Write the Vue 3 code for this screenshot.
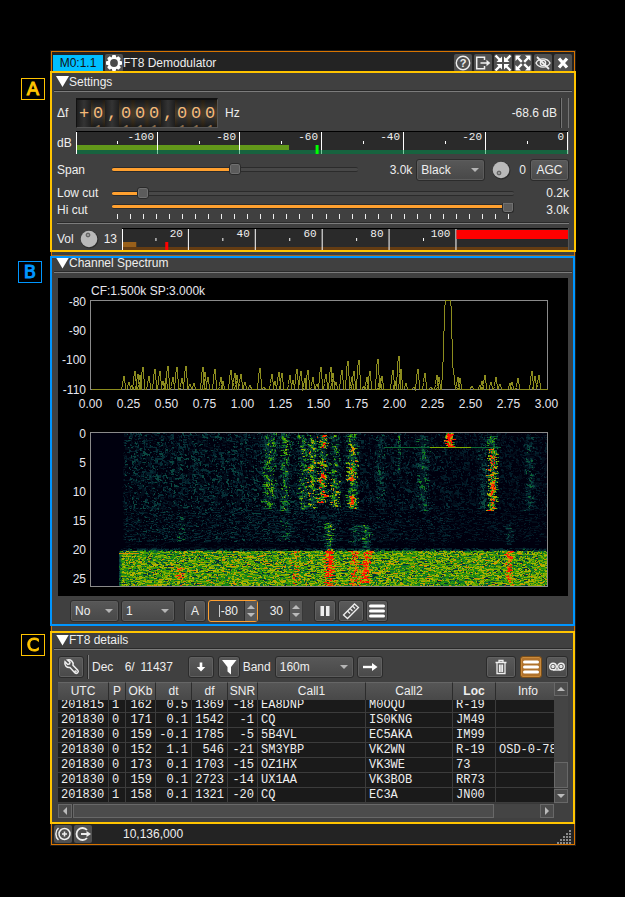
<script setup>
import { ref, onMounted } from 'vue'

const span = ref(50)
const lowCut = ref(6.5)
const hiCut = ref(100)

const dial = '+0,000,000'.split('')

const levelMajors = [-100, -80, -60, -40, -20, 0].map((v) => ({ label: v, at: ((v + 120) / 120) * 100 }))
const levelMinors = [-110, -90, -70, -50, -30, -10].map((v) => ((v + 120) / 120) * 100)
const volMajors = [20, 40, 60, 80, 100].map((v) => ({ label: v, at: v * 0.75 }))
const volMinors = [10, 30, 50, 70, 90].map((v) => v * 0.75)
const cutTicks = Array.from({ length: 31 }, (_, i) => i)

const dbLabels = [-80, -90, -100, -110].map((v, i) => ({ v, y: [27, 56, 85, 115][i] }))
const freqLabels = Array.from({ length: 13 }, (_, i) => ({ v: (i * 0.25).toFixed(2), x: 32.5 + i * 38 }))
const timeLabels = [0, 5, 10, 15, 20, 25].map((v, i) => ({ v, y: 160 + i * 29 }))

/* Trace: noise peaks as [x, y] above the floor of the plot */
const peaks = [
  [66, 98], [71, 104], [74, 107], [77, 93], [80, 96], [82, 97], [85, 89], [91, 98], [97, 91], [102, 93], [105, 103], [108, 100],
  [110, 88], [115, 99], [119, 89], [124, 100], [128, 88], [132, 106], [136, 105], [145, 89], [147, 94], [150, 99], [157, 91], [163, 99],
  [165, 103], [173, 92], [177, 95], [179, 97], [183, 96], [187, 104], [192, 107], [202, 90], [206, 109], [214, 96], [217, 103], [221, 94],
  [224, 95], [232, 97], [235, 102], [239, 91], [243, 93], [247, 100], [250, 92], [255, 99], [259, 106], [263, 89], [268, 96], [273, 89],
  [275, 95], [278, 104], [284, 92], [290, 83], [294, 99], [296, 93], [301, 82], [306, 108], [309, 99], [312, 93], [320, 81], [322, 100],
  [324, 98], [335, 92], [337, 103], [341, 78], [343, 91], [348, 105], [356, 109], [360, 91], [367, 95], [373, 109], [379, 97], [381, 99]
]
const peaksAfter = [
  [400, 99], [402, 100], [414, 108], [422, 107], [424, 103], [427, 97], [433, 104], [438, 99], [442, 106], [452, 105], [454, 104],
  [460, 100], [474, 93], [477, 98], [481, 97]
]
const spike = (list) => list.map(([x, y]) => `L${x - 3} 111L${x - 2} ${Math.min(110, y + 9)}L${x - 1} ${y}L${x} ${y}L${x + 1} 111`).join('')
const trace = `M33 111${spike(peaks)}L383 111L385 75L386 32L387 22L392 22L393 33L394 87L395 92L397 111${spike(peaksAfter)}L489 111`

/* Waterfall: deterministic noise, bucketed into one path per colour */
let seed = 7331
function rnd() {
  seed = (seed + 0x6d2b79f5) | 0
  let t = Math.imul(seed ^ (seed >>> 15), 1 | seed)
  t = (t + Math.imul(t ^ (t >>> 7), 61 | t)) ^ t
  return ((t ^ (t >>> 14)) >>> 0) / 4294967296
}
const palette = [
  '#00000e', '#020d1a', '#031c28', '#062e36', '#0a4640', '#0c6634', '#158218', '#3f9a06', '#7dab00', '#b3b200', '#d98b00', '#ee4a06', '#ff1000'
]
/* [centre x, top, bottom, half width, strength] */
const streaks = [
  [178, 0, 76, 6, 4], [194, 0, 78, 4, 3.8], [212, 2, 77, 4, 3.9], [221, 2, 76, 4, 5.4], [231, 2, 16, 4, 9], [231, 16, 28, 4, 4],
  [231, 28, 70, 4, 8.6], [243, 2, 46, 4, 3.4], [243, 46, 74, 4, 6.4], [261, 1, 28, 5, 6], [261, 28, 48, 5, 8.6], [261, 48, 62, 5, 4.6],
  [261, 62, 76, 5, 8.6], [289, 2, 70, 4, 1.8], [308, 0, 40, 1, 3.6], [332, 3, 78, 5, 3], [358, 0, 15, 4, 18], [392, 4, 76, 4, 2.2],
  [401, 3, 16, 4, 5.4], [401, 16, 78, 4, 10.5], [438, 4, 78, 4, 2.5], [90, 84, 108, 3, 2], [194, 88, 108, 4, 2.6],
  [238, 90, 115, 4, 5.4], [238, 115, 154, 4, 7], [264, 92, 113, 5, 2.6], [264, 118, 154, 5, 2.6], [275, 92, 115, 4, 5],
  [275, 116, 150, 4, 6], [418, 92, 112, 4, 2.6], [418, 118, 154, 3, 3.8], [204, 118, 154, 3, 2.4], [88, 134, 154, 4, 2.2]
]
function buildWaterfall() {
  const W = 456
  const H = 153
  const paths = palette.map(() => '')
  const above = new Array(W + 1).fill(0)
  for (let y = 0; y < H; y++) {
    const wobble = streaks.map(() => (rnd() - 0.5) * 5)
    let prev = rnd()
    let runStart = 0
    let runLevel = -1
    for (let x = 0; x <= W; x++) {
      let level = -2
      if (x < W) {
        const fresh = rnd()
        let n = rnd() < 0.4 ? prev : fresh
        if (y < 76 && rnd() < 0.25) n = above[x]
        prev = n
        above[x] = n
        let v = 0
        const left = y >= 116 ? 28 : 31
        if (x >= left) {
          const edge = Math.min(1, (x - left + 1) / 4)
          if (y >= 118) v = (5 + n * 5 + (n > 0.96 ? 1 : 0)) * (0.4 + 0.6 * edge) - (n < 0.08 ? 1.5 : 0)
          else if (y >= 115) v = n * (2 + (y - 114) * 1.6) * edge
          else {
            const fade = x < 250 ? 1 : x < 360 ? 0.78 : 0.62
            const zone = y > 108 ? 0.35 : y > 76 ? 0.9 : 1
            v = n * n * 4.7 * fade * zone * edge
          }
          for (let s = 0; s < streaks.length; s++) {
            const k = streaks[s]
            if (y < k[1] || y >= k[2]) continue
            const d = Math.abs(x - k[0] - (k[3] > 1 ? wobble[s] : 0))
            if (d <= k[3]) v += k[4] * (1 - (d / (k[3] + 1)) * 0.6) * (0.4 + n * 0.85)
          }
          if (y === 14 && x > 292 && x < 410) v = x > 338 && x < 380 ? 8 : 5
          if (y === 120 && x < 48) v = 10
        }
        level = Math.max(0, Math.min(palette.length - 1, Math.floor(v)))
      }
      if (level !== runLevel) {
        if (runLevel > 0) paths[runLevel] += `M${runStart} ${y}h${x - runStart}v1h-${x - runStart}z`
        runStart = x
        runLevel = level
      }
    }
  }
  return paths.map((d, i) => ({ d, fill: palette[i] })).filter((p) => p.d)
}
const waterfall = buildWaterfall()

const columns = ['UTC', 'P', 'OKb', 'dt', 'df', 'SNR', 'Call1', 'Call2', 'Loc', 'Info']
const rows = [
  ['201815', '1', '162', '0.5', '1369', '-18', 'EA8DNP', 'M0OQU', 'R-19', ''],
  ['201830', '0', '171', '0.1', '1542', '-1', 'CQ', 'IS0KNG', 'JM49', ''],
  ['201830', '0', '159', '-0.1', '1785', '-5', '5B4VL', 'EC5AKA', 'IM99', ''],
  ['201830', '0', '152', '1.1', '546', '-21', 'SM3YBP', 'VK2WN', 'R-19', 'OSD-0-78'],
  ['201830', '0', '173', '0.1', '1703', '-15', 'OZ1HX', 'VK3WE', '73', ''],
  ['201830', '0', '159', '0.1', '2723', '-14', 'UX1AA', 'VK3BOB', 'RR73', ''],
  ['201830', '1', '158', '0.1', '1321', '-20', 'CQ', 'EC3A', 'JN00', '']
]
const messages = ref(null)
onMounted(() => {
  messages.value.scrollTop = messages.value.scrollHeight
})
</script>

<template>
  <main class="page">
    <div class="window">
      <header class="titlebar">
        <span class="channel">M0:1.1</span>
        <button class="tool gear" aria-label="Channel settings">
          <svg viewBox="0 0 18 18">
            <g fill="#fff">
              <rect v-for="a in 4" :key="a" x="7" y="1" width="4" height="16" rx="1" :transform="`rotate(${a * 45} 9 9)`" />
              <circle cx="9" cy="9" r="6.3" />
            </g>
            <circle cx="9" cy="9" r="3.9" fill="#4a4a4a" />
          </svg>
        </button>
        <span class="title">FT8 Demodulator</span>
        <button class="tool" aria-label="Help">
          <svg viewBox="0 0 18 18">
            <circle cx="9" cy="9" r="6.7" fill="none" stroke="#eee" stroke-width="1.4" />
            <text x="9" y="13" text-anchor="middle" class="qmark">?</text>
          </svg>
        </button>
        <button class="tool" aria-label="Move to workspace">
          <svg viewBox="0 0 18 18" fill="none" stroke="#eee" stroke-width="1.5">
            <path d="M10.500 6V3.200H2.700v11.600h7.800V12M6.500 9h7" /><path d="M12.500 5.800L16.300 9l-3.800 3.200z" fill="#eee" stroke="none" />
          </svg>
        </button>
        <button class="tool" aria-label="Shrink">
          <svg viewBox="0 0 18 18">
            <g v-for="a in 4" :key="a" :transform="`rotate(${a * 90} 9 9)`">
              <path d="M1.500 1.500L6 6" stroke="#fff" stroke-width="2.400" /><path d="M8 2.500V8H2.500z" fill="#fff" />
            </g>
          </svg>
        </button>
        <button class="tool" aria-label="Expand">
          <svg viewBox="0 0 18 18">
            <g v-for="a in 4" :key="a" :transform="`rotate(${a * 90} 9 9)`">
              <path d="M3 3L7.800 7.800" stroke="#fff" stroke-width="2.400" /><path d="M1.500 1.500H7L1.500 7z" fill="#fff" />
            </g>
          </svg>
        </button>
        <button class="tool" aria-label="Hide">
          <svg viewBox="0 0 18 18" fill="none" stroke="#eee" stroke-width="1.400">
            <path d="M2 9C5 3.500 13 3.500 16 9C13 14.500 5 14.500 2 9z" /><circle cx="9" cy="9" r="2.600" /><path d="M3 3l12 12" stroke-width="1.800" />
          </svg>
        </button>
        <button class="tool" aria-label="Close">
          <svg viewBox="0 0 18 18"><path d="M5 4.500l8 9M13 4.500l-8 9" stroke="#fff" stroke-width="3.200" /></svg>
        </button>
      </header>

      <section class="section settings">
        <h2 class="heading"><i class="fold"></i>Settings</h2>
        <div class="body settings-body">
          <div class="row dial-row">
            <span class="caption">Δf</span>
            <div class="dial">
              <span v-for="(c, i) in dial" :key="i" class="cell" :class="{ digit: c === '0' }">
                <template v-if="c === '0'"><b class="near">9</b><b>0</b><b class="near">1</b></template>
                <b v-else>{{ c }}</b>
              </span>
            </div>
            <span class="unit">Hz</span>
            <span class="power">-68.6 dB</span>
            <i class="bar-frame"></i>
          </div>

          <div class="row meter-row">
            <span class="caption">dB</span>
            <svg class="meter">
              <rect width="100%" height="100%" fill="#2a2a2a" />
              <rect y="14" width="43.300%" height="5" fill="#62981a" />
              <rect y="19" width="100%" height="4" fill="#17633f" />
              <rect x="0" y="1" width="1" height="22" fill="#fff" />
              <rect v-for="m in levelMinors" :key="m" :x="m + '%'" y="10" width="1" height="3" fill="#fff" />
              <svg v-for="m in levelMajors" :key="m.label" :x="m.at + '%'" class="mark">
                <rect x="-1" y="1" width="1" height="18" fill="#fff" />
                <rect x="-1" y="19" width="1" height="4" fill="#7fc9a0" />
                <text x="-4" y="9" text-anchor="end">{{ m.label }}</text>
              </svg>
              <rect x="48.700%" y="14" width="3" height="9" fill="#0f0" />
              <rect width="100%" height="1" fill="#000" />
            </svg>
          </div>

          <div class="row span-row">
            <label class="caption wide" for="span">Span</label>
            <input id="span" v-model="span" class="slider" type="range" min="0" max="100" :style="{ '--fill': span + '%' }" />
            <span class="span-value">3.0k</span>
            <span class="select black"><select aria-label="Window"><option>Black</option></select></span>
            <svg class="knob" viewBox="0 0 20 20" role="img" aria-label="Averaging">
              <circle cx="10.500" cy="10.500" r="9" fill="#2c2c2c" /><circle cx="10" cy="10" r="8.300" fill="#b9b9b9" />
              <circle cx="8" cy="13" r="1.900" fill="#999" stroke="#555" />
            </svg>
            <span class="agc-value">0</span>
            <button class="btn agc">AGC</button>
          </div>

          <div class="cuts">
            <div class="row cut-row">
              <label class="caption wide" for="low">Low cut</label>
              <input id="low" v-model="lowCut" class="slider" type="range" min="0" max="100" step="0.5" :style="{ '--fill': lowCut + '%' }" />
              <span class="cut-value">0.2k</span>
            </div>
            <div class="row cut-row hi">
              <label class="caption wide" for="hi">Hi cut</label>
              <div class="ticked">
                <input id="hi" v-model="hiCut" class="slider" type="range" min="0" max="100" :style="{ '--fill': hiCut + '%' }" />
                <div class="ticks"><i v-for="t in cutTicks" :key="t"></i></div>
              </div>
              <span class="cut-value">3.0k</span>
            </div>
          </div>

          <hr class="rule" />

          <div class="row vol-row">
            <span class="vol">Vol</span>
            <svg class="knob" viewBox="0 0 20 20" role="img" aria-label="Volume">
              <circle cx="10.500" cy="10.500" r="9" fill="#2c2c2c" /><circle cx="10" cy="10" r="8.300" fill="#b9b9b9" />
              <circle cx="9" cy="6" r="1.900" fill="#999" stroke="#555" />
            </svg>
            <span class="vol-value">13</span>
            <svg class="meter">
              <rect width="100%" height="100%" fill="#2a2a2a" />
              <rect y="14" width="3.200%" height="5" fill="#99601a" />
              <rect y="19" width="100%" height="4" fill="#643c12" />
              <rect x="0" y="1" width="1" height="22" fill="#fff" />
              <rect v-for="m in volMinors" :key="m" :x="m + '%'" y="10" width="1" height="3" fill="#fff" />
              <svg v-for="m in volMajors" :key="m.label" :x="m.at + '%'" class="mark">
                <rect x="-1" y="1" width="1" height="22" fill="#fff" />
                <text x="-6" y="9" text-anchor="end">{{ m.label }}</text>
              </svg>
              <rect x="75%" y="2" width="25%" height="9" fill="#f00" />
              <rect x="9.700%" y="14" width="3" height="9" fill="#f00" />
              <rect width="100%" height="1" fill="#000" />
            </svg>
          </div>
        </div>
        <div class="outline gold"><span class="badge">A</span></div>
      </section>

      <section class="section spectrum">
        <h2 class="heading"><i class="fold"></i>Channel Spectrum</h2>
        <div class="body">
          <svg class="plot" viewBox="0 0 510 318" shape-rendering="crispEdges">
            <rect width="510" height="318" fill="#000" />
            <text x="33" y="17">CF:1.500k SP:3.000k</text>
            <text v-for="l in dbLabels" :key="l.v" x="28" :y="l.y + 1" text-anchor="end">{{ l.v }}</text>
            <text v-for="l in freqLabels" :key="l.v" :x="l.x" y="130" text-anchor="middle">{{ l.v }}</text>
            <text v-for="l in timeLabels" :key="l.v" x="28" :y="l.y" text-anchor="end">{{ l.v }}</text>
            <rect x="32.500" y="22.500" width="457" height="89" fill="none" stroke="#8a8a8a" />
            <path :d="trace" transform="translate(.5 .5)" fill="none" stroke="#8c8c1e" />
            <rect x="33" y="155" width="456" height="153" fill="#00000e" />
            <g transform="translate(33 155)">
              <path v-for="p in waterfall" :key="p.fill" :d="p.d" :fill="p.fill" />
            </g>
            <rect x="32.500" y="154.500" width="457" height="154" fill="none" stroke="#8a8a8a" />
          </svg>
          <div class="row spec-tools">
            <span class="select no"><select aria-label="Averaging mode"><option>No</option></select></span>
            <span class="select one"><select aria-label="Averaging count"><option>1</option></select></span>
            <button class="btn sq auto">A</button>
            <span class="spin focus">
              <input type="text" value="-80" aria-label="Reference level" />
              <span class="steps"><button aria-label="Raise reference"></button><button class="down" aria-label="Lower reference"></button></span>
            </span>
            <span class="spin">
              <input type="text" value="30" aria-label="Range" />
              <span class="steps"><button aria-label="Raise range"></button><button class="down" aria-label="Lower range"></button></span>
            </span>
            <button class="btn sq pause" aria-label="Pause">
              <svg viewBox="0 0 18 18"><path d="M4.500 4h3.500v10h-3.500zM10 4h3.500v10h-3.500z" fill="#eee" /></svg>
            </button>
            <button class="btn mid" aria-label="Measure">
              <svg viewBox="0 0 18 18" fill="none" stroke="#eee" stroke-width="1.300">
                <path d="M1.500 13L12.500 2l4 3.500L5.500 16.500zM11 4.500l2 2M8.500 7l2 2M6 9.500l2 2" />
              </svg>
            </button>
            <button class="btn sq" aria-label="Spectrum settings">
              <svg viewBox="0 0 18 18"><path d="M2.500 4h13M2.500 9h13M2.500 14h13" stroke="#fff" stroke-width="3" stroke-linecap="round" /></svg>
            </button>
          </div>
        </div>
        <div class="outline blue"><span class="badge">B</span></div>
      </section>

      <section class="section details">
        <h2 class="heading"><i class="fold"></i>FT8 details</h2>
        <div class="body">
          <div class="row detail-tools">
            <button class="btn mid" aria-label="Decoder settings">
              <svg viewBox="0 0 18 18" fill="none" stroke="#eee" stroke-width="1.500">
                <path d="M8 9.500C5 10 2 7.500 3 3.800l2.700 2.700 1.800-.5.500-1.800L5.500 2C9 1.200 11.800 4 11 7.200l4.800 5c1.500 1.800-1 4.300-2.800 2.800z" />
                <circle cx="13.500" cy="13.500" r=".6" />
              </svg>
            </button>
            <i class="vbar"></i>
            <span class="dec">Dec</span>
            <span class="dec-count">6</span><span>/</span><span class="dec-total">11437</span>
            <button class="btn mid" aria-label="Scroll to bottom">
              <svg viewBox="0 0 18 18" fill="#fff"><path d="M7.700 4.500h2.600V9h3L9 13.500 4.700 9h3z" /></svg>
            </button>
            <button class="btn sq filter" aria-label="Filter">
              <svg viewBox="0 0 18 18" fill="#fff"><path d="M2 2h14.500L11 9v7.500l-3.500-3V9z" /></svg>
            </button>
            <label class="band" for="band">Band</label>
            <span class="select band-select"><select id="band"><option>160m</option></select></span>
            <button class="btn mid go" aria-label="Apply band">
              <svg viewBox="0 0 18 18"><path d="M2 9h10" stroke="#fff" stroke-width="2.400" /><path d="M11 5l5.500 4L11 13z" fill="#fff" /></svg>
            </button>
            <button class="btn trash" aria-label="Clear messages">
              <svg viewBox="0 0 18 18" fill="none" stroke="#eee" stroke-width="1.300">
                <path d="M3.500 4.500h11M7 4V2.500h4V4M5 5v10.500h8V5M7.500 6.500V14M9 6.500V14M10.500 6.500V14" />
              </svg>
            </button>
            <button class="btn sq on" aria-label="Message table">
              <svg viewBox="0 0 18 18"><path d="M2.500 4h13M2.500 9h13M2.500 14h13" stroke="#fff" stroke-width="3" stroke-linecap="round" /></svg>
            </button>
            <button class="btn sq" aria-label="Log messages">
              <svg viewBox="0 0 18 18" fill="none" stroke="#eee" stroke-width="1.400">
                <circle cx="5" cy="8.500" r="3.300" /><circle cx="13" cy="8.500" r="3.300" /><circle cx="5" cy="8.500" r="1" /><circle cx="13" cy="8.500" r="1" /><path d="M5 12h8" />
              </svg>
            </button>
          </div>

          <div class="grid">
            <div ref="messages" class="messages">
              <table>
                <colgroup><col v-for="c in columns" :key="c" :class="'c-' + c.toLowerCase()" /></colgroup>
                <thead><tr><th v-for="c in columns" :key="c" :class="{ strong: c === 'Loc' }">{{ c }}</th></tr></thead>
                <tbody>
                  <tr v-for="(r, i) in rows" :key="i">
                    <td v-for="(v, j) in r" :key="j" :class="{ num: j > 1 && j < 6 }">{{ v }}</td>
                  </tr>
                </tbody>
              </table>
            </div>
            <div class="vscroll">
              <button class="sb up" aria-label="Scroll up"></button><i class="track"></i><i class="thumb"></i><button class="sb dn" aria-label="Scroll down"></button>
            </div>
            <div class="hscroll">
              <button class="sb lf" aria-label="Scroll left"></button><i class="thumb"></i><i class="track"></i><button class="sb rt" aria-label="Scroll right"></button>
            </div>
            <i class="corner"></i>
          </div>
        </div>
        <div class="outline gold"><span class="badge">C</span></div>
      </section>

      <footer class="status">
        <button class="tool" aria-label="Duplicate channel">
          <svg viewBox="0 0 18 18" fill="none" stroke="#eee" stroke-width="1.500">
            <circle cx="10.500" cy="9" r="5.500" /><path d="M4.500 3C1 6 1 12 4.500 15M8 9h5M10.500 6.500v5" />
          </svg>
        </button>
        <button class="tool" aria-label="Move channel">
          <svg viewBox="0 0 18 18" fill="none" stroke="#eee" stroke-width="1.800">
            <path d="M13 5A6 6 0 1 0 13 13M7 9h6" /><path d="M12.500 6L17 9l-4.500 3z" fill="#eee" stroke="none" />
          </svg>
        </button>
        <span class="freq">10,136,000</span>
        <svg class="grip" viewBox="0 0 15 15" fill="#8a8a8a">
          <template v-for="r in 5" :key="r"><rect v-for="c in r" :key="c" :x="15 - c * 3" :y="r * 3 - 2" width="2" height="2" /></template>
        </svg>
      </footer>
    </div>
  </main>
</template>

<style>
body { margin: 0; background: #000; }
</style>

<style scoped>
* { box-sizing: border-box; }
.page {
  min-height: 100vh;
  padding: 51px 50px 51px 51px;
  background: #000;
  color: #eee;
  font: 12px/14px "Liberation Sans", Arial, sans-serif;
}
button, input, select { font: inherit; color: inherit; margin: 0; padding: 0; }
.window {
  display: flex;
  flex-direction: column;
  border: 1px solid #d87400;
  outline: 1px solid #1c1c1c;
  background: #404040;
}
.titlebar { display: flex; align-items: center; height: 20px; padding: 2px 2px 0 1px; background: #232323; gap: 2px; }
.channel { width: 50px; height: 16px; line-height: 16px; background: #00bfff; color: #111; text-align: center; }
.title { flex: 1; margin-left: -2px; }
.tool { flex: none; width: 18px; height: 18px; border: 0; border-radius: 2px; background: #505050; }
.tool svg { display: block; width: 18px; height: 18px; }
.qmark { font: bold 11px "Liberation Sans", sans-serif; fill: #eee; }

.section { position: relative; padding: 0 2px; }
.heading {
  display: flex;
  align-items: center;
  height: 20px;
  margin: 0;
  padding-left: 2px;
  border-bottom: 1px solid #7c7c7c;
  box-shadow: inset 0 -1px #2a2a2a;
  font: inherit;
}
.fold { width: 13px; height: 11px; background: #fff; clip-path: polygon(0 0, 100% 0, 50% 100%); }
.body { padding: 0 3px; }
.row { display: flex; align-items: center; }
.caption { flex: none; width: 19px; }
.caption.wide { width: 55px; }

.settings { padding-bottom: 4px; border-bottom: 1px solid #a0651c; }
.settings-body { display: flex; flex-direction: column; gap: 3px; padding-top: 6px; }
.dial { display: flex; height: 30px; border: 1px solid #111; border-top-width: 2px; border-right-color: #555; border-bottom-color: #555; }
.cell {
  display: flex;
  flex-direction: column;
  justify-content: center;
  align-items: center;
  width: 14px;
  overflow: hidden;
  background: linear-gradient(90deg, #1e1e1e, #343434 50%, #1e1e1e);
  color: #f5ba78;
}
.cell.digit { background: linear-gradient(#0008, #0000 40% 60%, #0008), linear-gradient(90deg, #4c3b22, #363636 25% 75%, #4c3b22); }
.cell b { flex: none; font: 17px/18px "Liberation Mono", monospace; }
.cell .near { color: #8a6b4a; }
.unit { margin-left: 7px; }
.power { margin-left: auto; }
.bar-frame { width: 8px; height: 30px; margin-left: 4px; border: solid #747474; border-width: 0 1px; box-shadow: -1px 0 #2a2a2a; }
.meter { flex: 1; display: block; height: 23px; min-width: 0; border-right: 1px solid #555; }
.mark { overflow: visible; }
.meter text { font: 11px "Liberation Mono", monospace; fill: #f0f0f0; }
.meter-row { height: 23px; }
.span-row { height: 25px; }
.slider {
  flex: 1;
  display: block;
  min-width: 0;
  height: 14px;
  appearance: none;
  background: none;
}
.slider::-webkit-slider-runnable-track {
  height: 5px;
  border: solid #2b2b2b;
  border-width: 1px 0;
  border-radius: 2px;
  background: linear-gradient(#ffa02f, #ffa02f) 0 0 / var(--fill) 100% no-repeat #484848;
}
.slider::-webkit-slider-thumb {
  appearance: none;
  width: 12px;
  height: 12px;
  margin-top: -5px;
  border: 1px solid #2a2a2a;
  border-radius: 3px;
  background: #5c5c5c;
  box-shadow: inset 0 0 0 1px #707070;
}
.span-row .slider { flex: 247 1 0; }
.span-value { flex: 54 1 0; text-align: right; white-space: nowrap; }
.knob { flex: none; width: 20px; height: 20px; }
.span-row .knob { margin-left: 6px; }
.agc-value { margin: 0 4px 0 8px; }
.agc { width: 39px; }

.btn {
  flex: none;
  display: flex;
  align-items: center;
  justify-content: center;
  height: 22px;
  border: 1px solid #2b2b2b;
  border-radius: 3px;
  background: linear-gradient(#5a5a5a, #494949);
  box-shadow: inset 0 0 0 1px #606060;
}
.btn svg { width: 18px; height: 18px; }
.btn.on { border-color: #7a4e18; background: #b0722c; box-shadow: inset 0 0 0 1px #c98a3c; }
.sq { width: 22px; }
.mid { width: 26px; }
.select { position: relative; flex: none; height: 22px; }
.select select {
  display: block;
  width: 100%;
  height: 22px;
  padding-left: 4px;
  appearance: none;
  border: 1px solid #2b2b2b;
  border-radius: 3px;
  background: linear-gradient(#585858, #484848);
  box-shadow: inset 0 0 0 1px #5c5c5c;
}
.select::after {
  content: "";
  position: absolute;
  right: 6px;
  top: 9px;
  border: 4px solid transparent;
  border-top-color: #b5b5b5;
  border-bottom: 0;
}
.black { width: 69px; margin-left: 4px; }

.cut-row { height: 16px; }
.cut-row.hi { height: 18px; }
.cut-row .slider, .ticked { flex: 1; }
.cut-value { width: 55px; text-align: right; }
.ticked { min-width: 0; align-self: flex-start; padding-top: 1px; }
.ticked .slider { width: 100%; height: 9px; }
.ticked .slider::-webkit-slider-thumb { height: 10px; margin-top: -2px; border-top: 0; border-radius: 0 0 3px 3px; }
.ticks { display: flex; justify-content: space-between; padding: 3px 5px 0; }
.ticks i { width: 1px; height: 5px; background: #eee; }
.rule { width: 100%; height: 2px; margin: 0; border: 0; border-top: 1px solid #2a2a2a; border-bottom: 1px solid #7c7c7c; }
.vol-row { height: 24px; }
.vol-row .knob { margin-left: 5px; }
.vol-value { margin: 0 5px; }

.spectrum { padding-bottom: 8px; }
.spectrum .heading { height: 17px; padding-bottom: 2px; }
.spectrum .body { padding: 5px 4px 0; }
.plot { display: block; width: 100%; }
.plot text { font: 12px "Liberation Sans", Arial, sans-serif; fill: #e6e6ee; }
.spec-tools { padding: 4px 0 0 12px; }
.no { width: 49px; margin-right: 2px; }
.one { width: 54px; margin-right: 9px; }
.auto { margin-right: 2px; }
.spin { display: flex; width: 45px; height: 22px; border: 1px solid #383838; border-radius: 3px; background: #404040; }
.spin.focus { width: 50px; border-color: #ffa02f; }
.spin input { flex: 1; min-width: 0; border: 0; background: none; text-align: right; padding-right: 6px; outline: 0; }
.spin.focus input { background: linear-gradient(#ccc, #ccc) 10px 4px / 1px 12px no-repeat; }
.steps { display: flex; flex-direction: column; width: 13px; background: #5a5a5a; border-left: 1px solid #2b2b2b; }
.steps button { position: relative; flex: 1; border: 0; background: none; }
.steps button::after { content: ""; position: absolute; left: 2px; top: 4px; border: 4px solid transparent; border-top: 0; border-bottom-color: #bbb; }
.steps .down::after { border-top: 4px solid #bbb; border-bottom: 0; top: 2px; }
.pause { margin-left: 11px; margin-right: 2px; }
.pause + .btn { margin-right: 2px; }

.details .heading { padding-top: 1px; }
.details .body { padding: 6px 4px 6px; }
.vbar { width: 2px; height: 24px; margin: 0 3px 0 3px; border-left: 1px solid #2a2a2a; background: #7c7c7c; }
.detail-tools { height: 22px; }
.dec-count { width: 18px; text-align: right; }
.dec-total { width: 36px; margin-left: 4px; margin-right: 13px; text-align: center; }
.filter { margin: 0 3px 0 4px; }
.band { margin-right: 4px; }
.band-select { width: 79px; }
.go { margin-left: 3px; margin-right: auto; }
.trash { width: 30px; }
.trash ~ .btn { margin-left: 4px; }

.grid { display: grid; grid-template-columns: minmax(0, 1fr) 14px; margin-top: 4px; background: #383838; }
.messages { max-height: 121px; overflow: hidden; }
table { width: 100%; min-width: 496px; table-layout: fixed; border-spacing: 0; background: #1a1a1a; }
.c-utc { width: 51px; }
.c-p { width: 17px; }
.c-okb, .c-snr { width: 30px; }
.c-dt, .c-df { width: 36px; }
.c-call1 { width: 108px; }
.c-call2 { width: 87px; }
.c-loc { width: 43px; }
th {
  position: sticky;
  top: 0;
  height: 18px;
  padding: 0 0 1px;
  border-right: 1px solid #2c2c2c;
  border-top: 1px solid #666;
  background: linear-gradient(#565656, #484848);
  font-weight: normal;
}
th:last-child { padding-left: 22px; text-align: left; }
th.strong { font-weight: bold; }
td {
  height: 15px;
  padding: 0 3px;
  border-right: 1px solid #3c3c3c;
  border-bottom: 1px solid #3c3c3c;
  font: 12px/14px "Liberation Mono", monospace;
  white-space: nowrap;
  overflow: hidden;
}
td.num { text-align: right; }
th:last-child, td:last-child { border-right: 0; }
.vscroll { display: flex; flex-direction: column; }
.hscroll { display: flex; height: 15px; padding-top: 1px; }
.sb, .thumb { border: 1px solid #686868; background: #4c4c4c; }
.sb { display: flex; align-items: center; justify-content: center; flex: none; width: 14px; height: 14px; }
.sb::after { content: ""; border: 4px solid transparent; }
.up::after { border-top: 0; border-bottom-color: #bbb; }
.dn::after { border-bottom: 0; border-top-color: #bbb; }
.lf::after { border-left: 0; border-right-color: #bbb; }
.rt::after { border-right: 0; border-left-color: #bbb; }
.track { flex: 1; background: #444; }
.vscroll .thumb { height: 26px; margin-bottom: 1px; }
.hscroll .thumb { flex: 9; margin-left: 1px; }
.corner { background: #404040; }

.status { display: flex; align-items: center; gap: 2px; height: 20px; padding: 0 2px; background: #232323; }
.freq { margin-left: 29px; }
.grip { width: 15px; height: 15px; margin: 4px 0 0 auto; }

.outline { position: absolute; z-index: 2; border: 2px solid; pointer-events: none; }
.badge {
  position: absolute;
  width: 24px;
  height: 22px;
  border: 1px solid;
  text-align: center;
  font: 18px/20px "DejaVu Sans", sans-serif;
  -webkit-text-stroke: 1px;
}
.gold { border-color: #ffc400; color: #ffc400; }
.blue { inset: 0 -1px 4px -2px; border-color: #0096ff; color: #0096ff; }
.settings .outline { inset: -1px -2px 3px -2px; }
.details .outline { inset: 1px -1px 0 -2px; }
.settings .badge { left: -31px; top: 5px; }
.blue .badge { left: -34px; top: 3px; }
.details .badge { left: -31px; top: 1px; }
</style>
